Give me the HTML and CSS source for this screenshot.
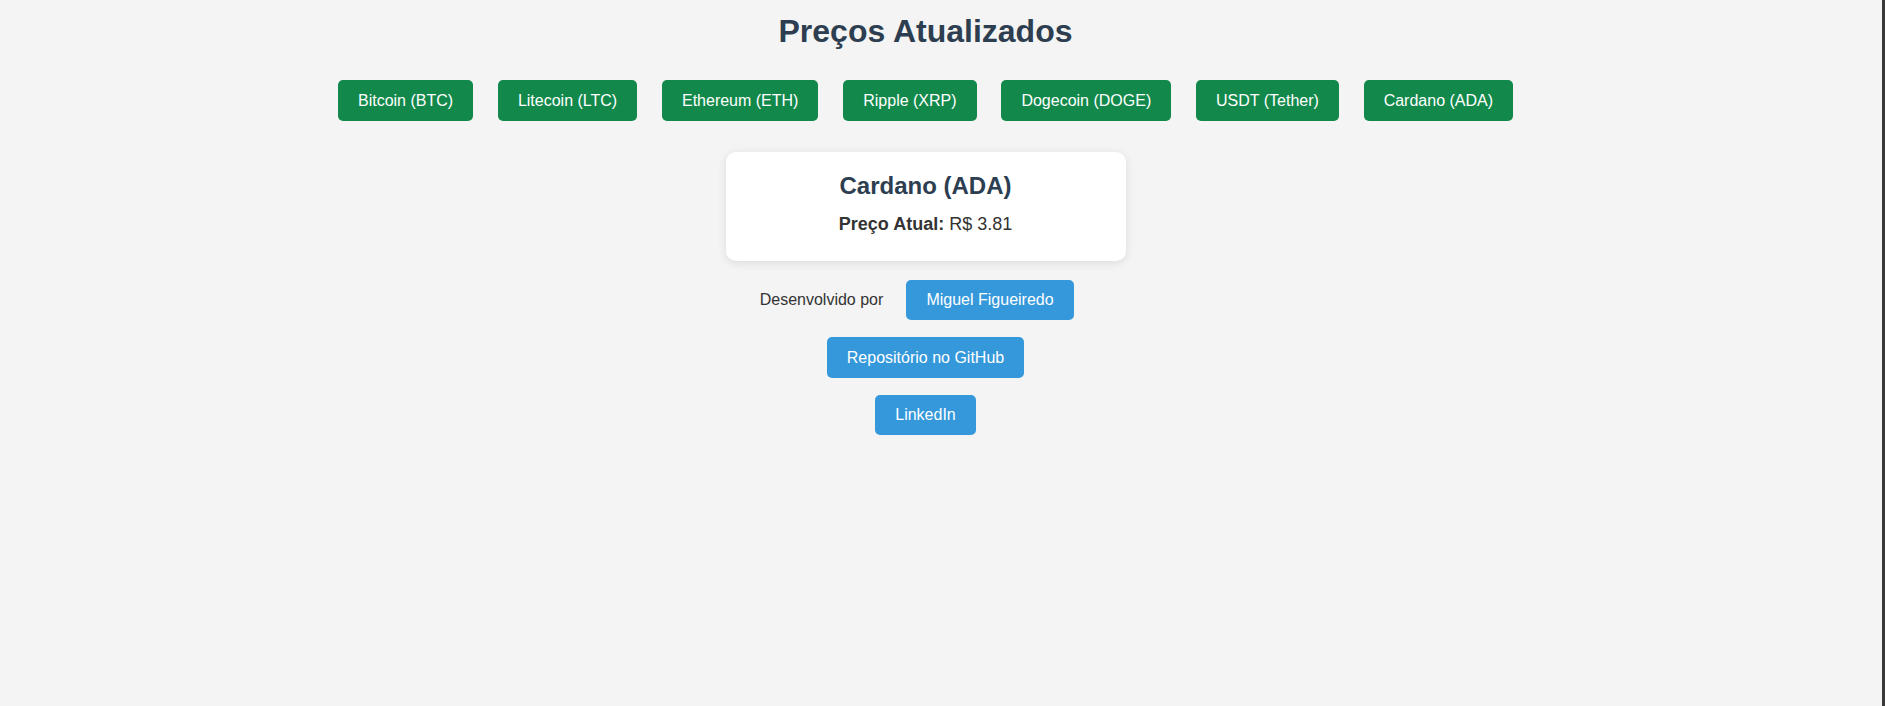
FILE: index.html
```html
<!DOCTYPE html>
<html lang="pt-BR">
<head>
<meta charset="utf-8">
<title>Preços Atualizados</title>
<link rel="stylesheet" href="styles.css">
</head>
<body>
<div class="page">
  <h1 class="title">Preços Atualizados</h1>
  <div class="coins">
    <button class="coin-btn">Bitcoin (BTC)</button>
    <button class="coin-btn">Litecoin (LTC)</button>
    <button class="coin-btn">Ethereum (ETH)</button>
    <button class="coin-btn">Ripple (XRP)</button>
    <button class="coin-btn">Dogecoin (DOGE)</button>
    <button class="coin-btn">USDT (Tether)</button>
    <button class="coin-btn">Cardano (ADA)</button>
  </div>
  <div class="card">
    <h2 class="card-title">Cardano (ADA)</h2>
    <p class="card-price"><strong>Preço Atual:</strong> R$ 3.81</p>
  </div>
  <div class="credits">
    <div class="dev-row">
      <span class="dev-label">Desenvolvido por</span>
      <a class="link-btn">Miguel Figueiredo</a>
    </div>
    <a class="link-btn">Repositório no GitHub</a>
    <a class="link-btn">LinkedIn</a>
  </div>
</div>
</body>
</html>
```

FILE: styles.css
```css
html, body {
  margin: 0;
  padding: 0;
}
body {
  background: #f4f4f4;
  font-family: "Liberation Sans", Arial, sans-serif;
  color: #333;
  min-height: 100vh;
  box-sizing: border-box;
  border-right: 3px solid #3a3a3a;
}
.page {
  width: 1851px;
  padding-top: 12.5px;
  display: flex;
  flex-direction: column;
  align-items: center;
}
.title {
  margin: 0;
  font-size: 32px;
  font-weight: bold;
  color: #2c3e50;
  line-height: normal;
}
.coins {
  margin-top: 30.7px;
  display: flex;
  gap: 24.8px;
  justify-content: center;
}
.coin-btn {
  font-family: "Liberation Sans", Arial, sans-serif;
  font-size: 16px;
  line-height: normal;
  padding: 11.6px 20px;
  border: none;
  border-radius: 5px;
  background: #12894b;
  color: #fff;
  cursor: pointer;
}
.card {
  margin-top: 30.3px;
  width: 400px;
  box-sizing: border-box;
  padding: 20px 20px 25.4px;
  background: #fff;
  border-radius: 10px;
  box-shadow: 0 2px 10px rgba(0, 0, 0, 0.1);
  text-align: center;
}
.card-title {
  margin: 0 0 14.6px;
  font-size: 24px;
  line-height: normal;
  color: #2c3e50;
}
.card-price {
  margin: 0;
  font-size: 18px;
  line-height: normal;
  color: #333;
}
.credits {
  margin-top: 19px;
  display: flex;
  flex-direction: column;
  align-items: center;
  gap: 17px;
}
.dev-row {
  display: flex;
  align-items: center;
  gap: 23.1px;
  padding-right: 17.7px;
}
.dev-label {
  font-size: 16px;
  color: #333;
}
.link-btn {
  display: block;
  font-size: 16px;
  line-height: normal;
  padding: 11.3px 20px;
  border-radius: 5px;
  background: #3498db;
  color: #fff;
  text-decoration: none;
}
```
